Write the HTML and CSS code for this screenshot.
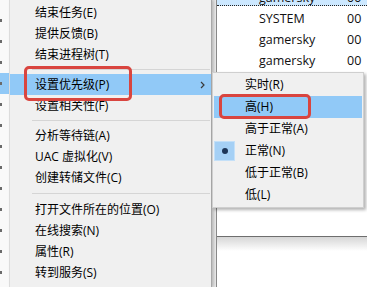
FILE: index.html
```html
<!DOCTYPE html>
<html lang="zh-CN">
<head>
<meta charset="utf-8">
<title>设置优先级</title>
<link rel="stylesheet" href="styles.css">
</head>
<body>
<div class="screen">
  <div class="edge">
    <i></i><i></i><i></i><i class="hl"></i><i></i><i></i><i></i><i></i><i></i><i></i><i></i><i></i><i></i>
  </div>
  <div class="menu">
    <div class="item">结束任务(E)</div>
    <div class="item">提供反馈(B)</div>
    <div class="item">结束进程树(T)</div>
    <div class="sep"></div>
    <div class="item active">设置优先级(P)<svg class="chev" viewBox="0 0 5 8"><path d="M1 1 L4 4 L1 7" fill="none" stroke="#3a3a3a" stroke-width="1.2"/></svg></div>
    <div class="item">设置相关性(F)</div>
    <div class="sep"></div>
    <div class="item">分析等待链(A)</div>
    <div class="item">UAC 虚拟化(V)</div>
    <div class="item">创建转储文件(C)</div>
    <div class="sep wide"></div>
    <div class="item">打开文件所在的位置(O)</div>
    <div class="item">在线搜索(N)</div>
    <div class="item">属性(R)</div>
    <div class="item">转到服务(S)</div>
  </div>
  <div class="behind">
    <div class="gutter"></div>
    <div class="list">
      <div class="rows">
        <div class="row sel"><span class="name">gamersky</span><span>00</span></div>
        <div class="row"><span class="name">SYSTEM</span><span>00</span></div>
        <div class="row"><span class="name">gamersky</span><span>00</span></div>
        <div class="row"><span class="name">gamersky</span><span>00</span></div>
      </div>
      <div class="pane"></div>
    </div>
  </div>
  <div class="submenu">
    <div class="sub-item"><span class="check"></span>实时(R)</div>
    <div class="sub-item active"><span class="check"></span>高(H)</div>
    <div class="sub-item"><span class="check"></span>高于正常(A)</div>
    <div class="sub-item"><span class="check"><span class="bullet"></span></span>正常(N)</div>
    <div class="sub-item"><span class="check"></span>低于正常(B)</div>
    <div class="sub-item"><span class="check"></span>低(L)</div>
  </div>
  <div class="mark mark-main"></div>
  <div class="mark mark-sub"></div>
</div>
</body>
</html>
```
FILE: styles.css
```css
* { box-sizing: border-box; }
html, body { margin: 0; padding: 0; }
body {
  width: 367px;
  height: 287px;
  overflow: hidden;
  background: #fff;
  font-family: "Open Sans", "Noto Sans CJK SC", sans-serif;
  font-size: 12px;
  color: #000;
}
.screen {
  position: relative;
  display: grid;
  grid-template-columns: 9px 203px 155px;
  height: 287px;
  overflow: hidden;
}
.edge {
  background: #f9f9f9;
  padding-top: 10px;
  overflow: hidden;
}
.edge i {
  display: flex;
  align-items: center;
  height: 21px;
}
.edge i::before {
  content: "";
  width: 2px;
  height: 3px;
  background: #6a6a6a;
}
.edge i.hl { background: #91c9f7; }

.menu {
  position: relative;
  z-index: 1;
  background: #f0f0f0;
  border-left: 1px solid #dcdcdc;
  border-right: 1px solid #a8a8a8;
  padding-top: 2px;
  box-shadow: 2px 0 3px rgba(0,0,0,.15);
}
.item {
  height: 21px;
  line-height: 21px;
  padding-left: 25px;
  padding-right: 6px;
  display: flex;
  align-items: center;
  justify-content: space-between;
  white-space: nowrap;
}
.item.active { background: #91c9f7; }
.chev { width: 5px; height: 8px; }
.sep {
  height: 9px;
  display: flex;
  align-items: center;
  padding-left: 22px;
  padding-right: 1px;
}
.sep::before {
  content: "";
  flex: 1;
  height: 1px;
  background: #d5d5d5;
}
.sep.wide { height: 11px; }

.behind {
  display: grid;
  grid-template-columns: 4px 1fr;
  background: #ececec;
}
.gutter { background: linear-gradient(to right, #dadada, #ececec); }
.list {
  border-left: 1px solid #8a8a8a;
  display: flex;
  flex-direction: column;
  background: #fff;
}
.rows {
  height: 237px;
  border-bottom: 1px solid #6e6e6e;
  overflow: hidden;
}
.pane {
  flex: 1;
  background: linear-gradient(#d6d6d6, #fff 14px);
}
.row {
  height: 21px;
  padding: 5px 0 0 42px;
  line-height: 16px;
  display: flex;
  font-size: 12.5px;
  color: #111;
}
.row .name { width: 88px; }
.row.sel {
  margin-top: -15px;
  background: #cce8ff;
  border-bottom: 1px dotted #222;
}

.submenu {
  position: absolute;
  left: 212px;
  top: 72px;
  z-index: 2;
  width: 152px;
  height: 136px;
  background: #f0f0f0;
  border: 1px solid #cfcfcf;
  padding: 1px;
  box-shadow: 2px 2px 3px rgba(0,0,0,.3);
}
.sub-item {
  height: 22px;
  line-height: 22px;
  display: flex;
  align-items: center;
  white-space: nowrap;
}
.sub-item.active { background: #91c9f7; }
.check {
  width: 31px;
  height: 22px;
  display: flex;
  align-items: center;
  flex: none;
}
.bullet {
  width: 21px;
  height: 20px;
  background: #a5d0f5;
  border: 1px solid #c4e0f8;
  display: flex;
  align-items: center;
  justify-content: center;
}
.bullet::after {
  content: "";
  width: 6px;
  height: 6px;
  border-radius: 50%;
  background: #1d3557;
}

.mark {
  position: absolute;
  z-index: 3;
  border: 3px solid #d9453f;
  border-radius: 5px;
}
.mark-main { left: 24px; top: 66px; width: 108px; height: 35px; }
.mark-sub { left: 219px; top: 94px; width: 92px; height: 25px; }
```
